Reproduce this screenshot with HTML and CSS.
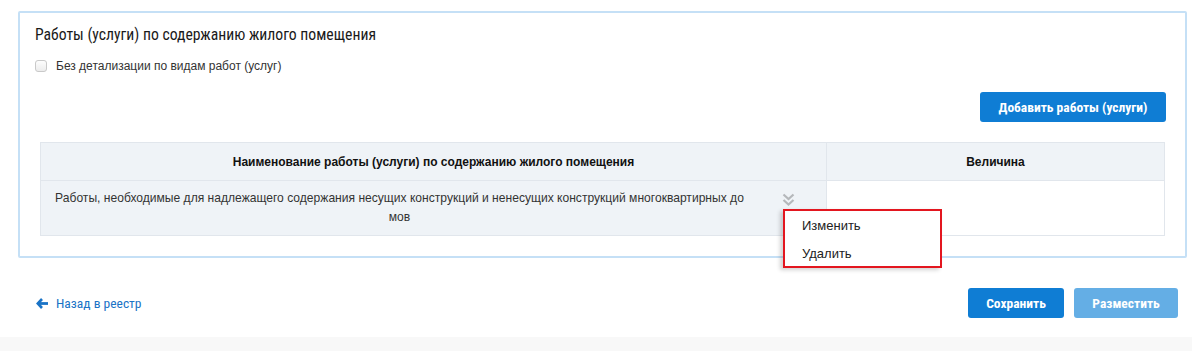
FILE: index.html
```html
<!DOCTYPE html>
<html lang="ru">
<head>
<meta charset="utf-8">
<link rel="stylesheet" href="styles.css">
</head>
<body>
<div class="page">
  <section class="panel">
    <h2 class="panel-title">Работы (услуги) по содержанию жилого помещения</h2>
    <label class="check"><span class="box"></span><span>Без детализации по видам работ (услуг)</span></label>
    <div class="actions-top">
      <button class="btn btn-primary add">Добавить работы (услуги)</button>
    </div>
    <div class="table">
      <div class="thead">
        <div class="th name">Наименование работы (услуги) по содержанию жилого помещения</div>
        <div class="th value">Величина</div>
      </div>
      <div class="trow">
        <div class="td name">
          <span class="cell-text">Работы, необходимые для надлежащего содержания несущих конструкций и ненесущих конструкций многоквартирных до мов</span>
          <svg class="chev" width="13" height="14" viewBox="0 0 13 14"><path d="M1.5 1.5 L6.5 6 L11.5 1.5" fill="none" stroke="#b5b8bb" stroke-width="2.2"/><path d="M1.5 7 L6.5 11.5 L11.5 7" fill="none" stroke="#b5b8bb" stroke-width="2.2"/></svg>
          <div class="menu">
            <div class="menu-item">Изменить</div>
            <div class="menu-item">Удалить</div>
          </div>
        </div>
        <div class="td value"></div>
      </div>
    </div>
  </section>
  <div class="bottom">
    <a class="back" href="#"><svg width="12" height="11" viewBox="0 0 12 11"><path d="M6 1 L1.8 5.5 L6 10" fill="none" stroke="#1a73c6" stroke-width="2.6"/><path d="M2 5.5 H12" stroke="#1a73c6" stroke-width="2.8"/></svg><span>Назад в реестр</span></a>
    <div class="bottom-actions">
      <button class="btn btn-primary save">Сохранить</button>
      <button class="btn btn-light place">Разместить</button>
    </div>
  </div>
</div>
<footer class="footer"></footer>
</body>
</html>
```

FILE: styles.css
```css
* { box-sizing: border-box; }
html, body { margin: 0; padding: 0; background: #fff; }
body { font-family: "Liberation Sans", Arial, sans-serif; color: #222; height: 351px; display: flex; flex-direction: column; }
.page { flex: 1; }

.panel {
  margin: 11px 5px 0 18px;
  border: 2px solid #c5e0f6;
  border-radius: 2px;
  padding: 12px 20px 20px 20px;
}
.panel-title {
  margin: 0 0 0 -5px;
  font-family: "Liberation Sans Narrow", "Roboto Condensed", "Liberation Sans", sans-serif;
  font-weight: normal;
  font-size: 15.7px;
  line-height: 20px;
  color: #1a1a1a;
}
.check {
  display: flex;
  align-items: center;
  gap: 9px;
  margin: 14px 0 0 -5px;
  font-size: 12px;
  line-height: 14px;
  color: #333;
}
.box {
  width: 12px; height: 12px;
  border: 1px solid #c9c9c9;
  border-radius: 3px;
  background: linear-gradient(#fdfdfd, #ececec);
}
.actions-top { display: flex; justify-content: flex-end; margin-top: 19px; margin-right: -1px; }
.btn {
  border: 0;
  border-radius: 3px;
  height: 30px;
  padding: 0 17px;
  color: #fff;
  font-family: "Liberation Sans Narrow", "Roboto Condensed", "Liberation Sans", sans-serif;
  font-weight: bold;
  font-size: 13.5px;
}
.btn-primary { background: #0f7dd4; }
.btn-light { background: #64aee5; }
.add { width: 186px; padding: 0; }

.table {
  margin-top: 20px;
  border: 1px solid #e1e6ec;
  font-size: 12px;
}
.thead, .trow { display: grid; grid-template-columns: 786px 1fr; }
.th {
  background: #eff3f7;
  height: 38px;
  display: flex; align-items: center; justify-content: center;
  font-weight: bold;
  color: #111;
  border-bottom: 1px solid #e1e6ec;
}
.th.name, .td.name { border-right: 1px solid #e1e6ec; }
.td { height: 54px; }
.td.name {
  background: #eff3f7;
  position: relative;
  padding: 8px 80px 0 12px;
  text-align: center;
  line-height: 19px;
  color: #333;
  font-size: 12.08px;
}
.chev { position: absolute; left: 741px; top: 12px; }
.menu {
  position: absolute;
  left: 742px; top: 28px;
  width: 159px; height: 59px;
  background: #fff;
  border: 2px solid #e3161f;
  box-shadow: -3px 2px 4px rgba(0,0,0,0.18);
  padding-top: 1px;
  text-align: left;
  z-index: 2;
}
.menu-item {
  font-size: 13px;
  line-height: 28px;
  padding-left: 17px;
  color: #222;
}

.bottom {
  display: flex;
  justify-content: space-between;
  align-items: center;
  margin: 30px 14px 0 36px;
}
.back {
  display: flex; align-items: center; gap: 8px;
  color: #1a73c6;
  text-decoration: none;
  font-family: "Liberation Sans Narrow", "Roboto Condensed", "Liberation Sans", sans-serif;
  font-size: 13.5px;
}
.bottom-actions { display: flex; gap: 10px; }
.save { width: 96px; padding: 0; }
.place { width: 104px; padding: 0; }

.footer { height: 14px; background: #f8f8f8; }
```
